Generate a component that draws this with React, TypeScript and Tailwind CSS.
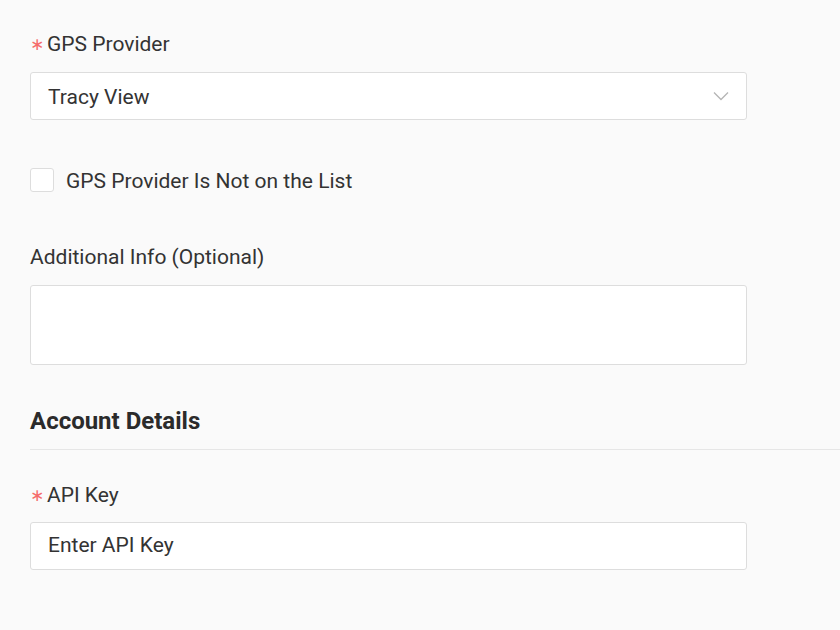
import React from 'react';

const Required = () => (
    <span
        className="inline-block text-[#f56c6c] text-[17px] w-[17px] leading-none"
        style={{ fontFamily: '"DejaVu Sans", sans-serif' }}
    >
        ∗
    </span>
);

const Label = ({ children, required }: { children: React.ReactNode; required?: boolean }) => (
    <div className="flex items-center h-6 text-[21px] text-[#333333] leading-6">
        {required && <Required />}
        <span>{children}</span>
    </div>
);

export default function App() {
    return (
        <div
            className="min-h-[630px] w-[840px] bg-[#fafafa] pl-[30px] pt-[32px] overflow-hidden"
            style={{ fontFamily: 'Roboto, "Liberation Sans", sans-serif' }}
        >
            {/* GPS Provider */}
            <Label required>GPS Provider</Label>
            <div className="mt-4 w-[717px] h-[48px] bg-white border border-[#dddddd] rounded-[3px] flex items-center justify-between pl-[17px] pr-[17px]">
                <span className="text-[21px] text-[#333333] pt-[3px]">Tracy View</span>
                <svg width="16" height="10" viewBox="0 0 16 10" fill="none">
                    <path d="M1 1.5L8 8.5L15 1.5" stroke="#b5b5b5" strokeWidth="1.3" />
                </svg>
            </div>

            {/* Checkbox */}
            <div className="mt-[48px] flex items-center h-6">
                <div className="w-6 h-6 bg-white border border-[#dddddd] rounded-[3px]" />
                <span className="ml-[12px] text-[21px] text-[#333333] pt-[3px]">GPS Provider Is Not on the List</span>
            </div>

            {/* Additional info */}
            <div className="mt-[53px]">
                <Label>Additional Info (Optional)</Label>
            </div>
            <div className="mt-4 w-[717px] h-[80px] bg-white border border-[#dddddd] rounded-[3px]" />

            {/* Account details */}
            <div className="mt-[42px] text-[24px] font-bold text-[#2b2b2b] leading-7">Account Details</div>
            <div className="mt-[14px] border-t border-[#e6e6e6]" />

            <div className="mt-[33px]">
                <Label required>API Key</Label>
            </div>
            <div className="mt-[15px] w-[717px] h-[48px] bg-white border border-[#dddddd] rounded-[3px] flex items-center pl-[17px]">
                <span className="text-[21px] text-[#333333]">Enter API Key</span>
            </div>
        </div>
    );
}
